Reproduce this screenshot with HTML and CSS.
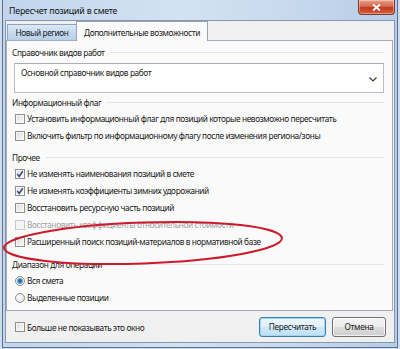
FILE: index.html
```html
<!DOCTYPE html>
<html lang="ru">
<head>
<meta charset="utf-8">
<link rel="stylesheet" href="styles.css">
</head>
<body>
<div class="stage">
  <div class="window">
    <div class="titlebar">
      <span class="title">Пересчет позиций в смете</span>
      <div class="close">
        <svg width="9" height="7" viewBox="0 0 9 7"><path d="M1 0.5 L8 6.5 M8 0.5 L1 6.5" stroke="#fff" stroke-width="1.8" fill="none"/></svg>
      </div>
    </div>
    <div class="client">
      <div class="tabs">
        <div class="tab hot">Новый регион</div>
        <div class="tab active">Дополнительные возможности</div>
      </div>
      <div class="panel">
        <div class="ghead"><span>Справочник видов работ</span><i class="gline"></i></div>
        <div class="combo">
          <span class="combo-text">Основной справочник видов работ</span>
          <svg class="chev" width="8" height="5" viewBox="0 0 8 5"><path d="M0.5 0.5 L4 4 L7.5 0.5" stroke="#3a3a3a" stroke-width="1.2" fill="none"/></svg>
        </div>

        <div class="ghead g2"><span>Информационный флаг</span><i class="gline"></i></div>
        <div class="row"><span class="cb"></span><span>Установить информационный флаг для позиций которые невозможно пересчитать</span></div>
        <div class="row"><span class="cb"></span><span>Включить фильтр по информационному флагу после изменения региона/зоны</span></div>

        <div class="ghead g3"><span>Прочее</span><i class="gline"></i></div>
        <div class="row"><span class="cb"><svg width="8" height="8" viewBox="0 0 8 8"><path d="M1.2 4 L3.2 6.4 L6.8 1.2" stroke="#33457f" stroke-width="1.5" fill="none"/></svg></span><span>Не изменять наименования позиций в смете</span></div>
        <div class="row"><span class="cb"><svg width="8" height="8" viewBox="0 0 8 8"><path d="M1.2 4 L3.2 6.4 L6.8 1.2" stroke="#33457f" stroke-width="1.5" fill="none"/></svg></span><span>Не изменять коэффициенты зимних удорожаний</span></div>
        <div class="row"><span class="cb"></span><span>Восстановить ресурсную часть позиций</span></div>
        <div class="row disabled"><span class="cb"></span><span>Восстановить коэффициенты относительной стоимости</span></div>
        <div class="row"><span class="cb"></span><span>Расширенный поиск позиций-материалов в нормативной базе</span></div>

        <div class="ghead g4"><span>Диапазон для операции</span><i class="gline"></i></div>
        <div class="row"><span class="rb on"></span><span>Вся смета</span></div>
        <div class="row"><span class="rb"></span><span>Выделенные позиции</span></div>
      </div>
      <div class="footer">
        <div class="row foot-check"><span class="cb"></span><span>Больше не показывать это окно</span></div>
        <div class="buttons">
          <button class="btn default">Пересчитать</button>
          <button class="btn cancel">Отмена</button>
        </div>
      </div>
    </div>
  </div>
  <svg class="mark" width="400" height="349" viewBox="0 0 400 349">
    <ellipse cx="143" cy="243" rx="139" ry="20.5" transform="rotate(-2 143 243)" fill="none" stroke="#cc1a2a" stroke-width="2"/>
  </svg>
</div>
</body>
</html>
```

FILE: styles.css
```css
* { box-sizing: border-box; }

html, body {
  margin: 0;
  padding: 0;
}

body {
  width: 400px;
  height: 349px;
  overflow: hidden;
  background: #cddcee;
  font-family: "Noto Sans", "Open Sans", sans-serif;
  font-size: 8.3px;
  letter-spacing: -0.39px;
  color: #1b1b1b;
}

.stage {
  position: relative;
  width: 400px;
  height: 349px;
  padding: 0 2px 0 2px;
}

.window {
  width: 396px;
  height: 348px;
  display: flex;
  flex-direction: column;
  border: 1px solid #5f7089;
  border-top: none;
  background: linear-gradient(90deg, #c2d5ec 0%, #d3e2f3 45%, #c9daee 70%, #b7cce6 100%);
  padding: 0 2px 4px 2px;
}

.titlebar {
  height: 20px;
  display: flex;
  align-items: flex-start;
  flex: none;
}

.title {
  padding-left: 4px;
  line-height: 20px;
  padding-top: 1px;
  font-size: 8.8px;
  letter-spacing: -0.2px;
  color: #111;
}

.close {
  margin-left: auto;
  width: 37px;
  height: 15px;
  border: 1px solid #7b3a2e;
  border-top: none;
  border-radius: 0 0 4px 4px;
  background: linear-gradient(#e8a08c 0%, #d7694f 45%, #c0391e 55%, #d5603f 100%);
  display: flex;
  align-items: center;
  justify-content: center;
  box-shadow: inset 0 0 0 1px rgba(255, 255, 255, 0.35);
}

.client {
  flex: 1;
  border: 1px solid #8698b0;
  background: #f0f0f0;
  display: flex;
  flex-direction: column;
}

.tabs {
  height: 19px;
  display: flex;
  align-items: flex-end;
  padding-left: 1px;
  flex: none;
}

.tab {
  border: 1px solid #98a6b8;
  border-bottom: none;
  white-space: nowrap;
  text-align: center;
  padding: 0;
  color: #1b1b1b;
}

.tab.hot {
  height: 16px;
  line-height: 15px;
  width: 69px;
  background: linear-gradient(#dce9f7 0%, #c6daf0 50%, #b6cfea 100%);
  border-color: #8ea3bd;
  border-right: none;
}

.tab.active {
  position: relative;
  height: 20px;
  margin-bottom: -1px;
  line-height: 21px;
  width: 132px;
  background: #fafafa;
  border-color: #98a3b3;
}

.panel {
  height: 271px;
  margin-right: 1px;
  border: 1px solid #a3acb8;
  background: #fafafa;
  padding-top: 5px;
  flex: none;
}

.ghead {
  height: 14px;
  line-height: 14px;
  display: flex;
  align-items: center;
  padding-left: 5px;
  margin-right: 8px;
  color: #1b1b1b;
}

.gline {
  flex: 1;
  height: 1px;
  margin-left: 6px;
  margin-top: -2px;
  background: #e2e5e9;
}

.g2 { margin-top: 3px; }
.g3 { margin-top: 7px; }
.g4 { margin-top: 8px; }

.combo {
  margin: 3px 8px 0 7px;
  height: 30px;
  background: #fff;
  border: 1px solid #b8bec8;
  border-top-color: #a9afb9;
  padding: 2px 0 0 6px;
  line-height: 14px;
  display: flex;
  justify-content: space-between;
}

.chev {
  margin: 11px 6px 0 0;
}

.row {
  height: 17px;
  display: flex;
  align-items: center;
  padding-left: 8px;
  white-space: nowrap;
}

.row > span:last-child {
  margin-left: 2px;
}

.cb {
  width: 10px;
  height: 10px;
  flex: none;
  border: 1px solid #8e8f90;
  background: linear-gradient(135deg, #d6d9de 0%, #eceef0 55%, #fafafa 100%);
  box-shadow: inset 0 0 0 1px #f6f6f6;
  display: flex;
  align-items: center;
  justify-content: center;
}

.cb svg { display: block; }

.row.disabled { color: #a2a2a2; }
.row.disabled .cb {
  border-color: #c9c9c9;
  background: #f4f4f4;
}

.rb {
  width: 10px;
  height: 10px;
  flex: none;
  border-radius: 50%;
  border: 1px solid #8e8f90;
  background: radial-gradient(circle at 35% 35%, #ffffff 0%, #e4e6ea 70%, #d3d6db 100%);
}

.rb.on {
  background: radial-gradient(circle, #1f5f8e 0%, #2f7fb5 30%, #7fb6d8 48%, #e6eef4 62%, #f2f2f2 100%);
}

.footer {
  flex: 1;
  display: flex;
  align-items: center;
  justify-content: space-between;
  padding: 1px 8px 0 1px;
}

.foot-check {
  padding-left: 8px;
}

.buttons {
  display: flex;
  gap: 6px;
}

.btn {
  font-family: "Noto Sans", "Open Sans", sans-serif;
  font-size: 8.3px;
  letter-spacing: -0.32px;
  color: #1b1b1b;
  height: 20px;
  padding: 0;
  border: 1px solid #707070;
  border-radius: 3px;
  background: linear-gradient(#f3f3f3 0%, #ebebeb 48%, #dddddd 52%, #cfcfcf 100%);
  box-shadow: inset 0 0 0 1px rgba(255, 255, 255, 0.7);
  line-height: 18px;
}

.btn.default {
  width: 67px;
  border-color: #3b7db3;
  background: linear-gradient(#eef7fd 0%, #e0f0fb 48%, #cfe8f8 52%, #bfe0f5 100%);
  box-shadow: inset 0 0 0 1px #9fd6f7;
}

.btn.cancel {
  width: 54px;
}

.mark {
  position: absolute;
  left: 0;
  top: 0;
  pointer-events: none;
}
```
